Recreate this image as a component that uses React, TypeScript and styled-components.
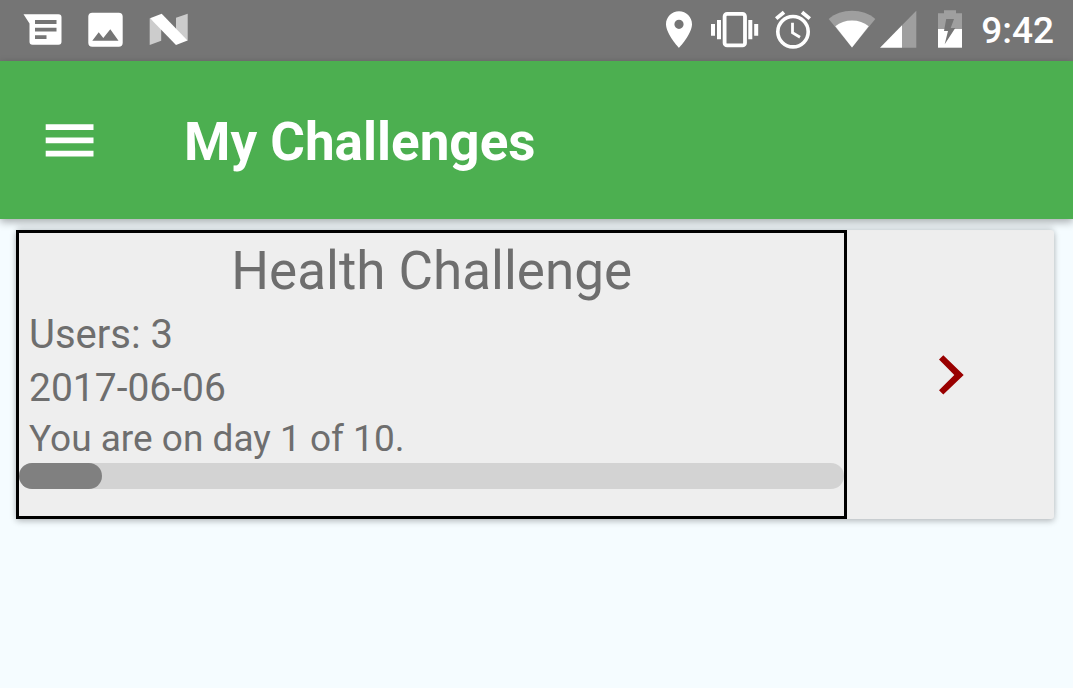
import React from "react";
import styled, { createGlobalStyle } from "styled-components";

const GlobalStyle = createGlobalStyle`
  *, *::before, *::after { box-sizing: border-box; }
  body {
    margin: 0;
    background: #f5fcff;
    color: #6e6e6e;
    font-family: Roboto, "Liberation Sans", sans-serif;
  }
`;

const StatusBar = styled.div`
  display: flex;
  align-items: center;
  justify-content: space-between;
  height: 61px;
  padding: 0 19px 1px 23px;
  background: #757575;
  color: #fff;
`;

const IconGroup = styled.div<{ $gap: number }>`
  display: flex;
  align-items: center;
  gap: ${(p) => p.$gap}px;
`;

const Glyph = styled.svg`
  display: block;
  flex: none;
  fill: #fff;
`;

const Clock = styled.time`
  padding-top: 2px;
  font-size: 37px;
  line-height: 46px;
  font-weight: 500;
`;

const Header = styled.header`
  position: relative;
  z-index: 1;
  display: flex;
  align-items: center;
  gap: 90px;
  height: 158px;
  padding: 0 45px;
  background: #4caf50;
  color: #fff;
  box-shadow: 0 3px 8px rgba(0, 0, 0, 0.32);
`;

const IconButton = styled.button`
  display: flex;
  align-items: center;
  justify-content: center;
  padding: 0;
  border: 0;
  background: transparent;
  color: inherit;
  cursor: pointer;
`;

const Title = styled.h1`
  margin: 0;
  padding-top: 4px;
  font-size: 53px;
  line-height: 62px;
  font-weight: 700;
`;

const Main = styled.main`
  padding: 11px 19px 16px 16px;
`;

const Card = styled.article`
  display: flex;
  background: #eee;
  border-radius: 3px;
  box-shadow:
    0 2px 6px rgba(0, 0, 0, 0.28),
    0 -6px 6px -1px rgba(0, 0, 0, 0.07);
`;

const Summary = styled.div`
  flex: 0 0 calc(80% + 1px);
  padding-bottom: 27px;
  border: 3px solid #000;
`;

const ChallengeName = styled.h2`
  margin: 0;
  font-size: 53px;
  line-height: 76px;
  font-weight: 400;
  text-align: center;
`;

const Detail = styled.p<{ $size: number; $line: number }>`
  margin: 0;
  padding: 0 10px;
  font-size: ${(p) => p.$size}px;
  line-height: ${(p) => p.$line}px;
`;

const Track = styled.div`
  height: 26px;
  border-radius: 13px;
  background: #d3d3d3;
`;

const Fill = styled.div`
  height: 100%;
  border-radius: 13px;
  background: #808080;
`;

const OpenButton = styled(IconButton)`
  flex: 1;
  color: #990000;
`;

const DIM = "#9f9f9f";

const MessageIcon = () => (
  <Glyph width="40" height="40" viewBox="0 0 40 40">
    <path d="M.5 4.2H35.5a3 3 0 0 1 3 3V31.700a3 3 0 0 1-3 3H9.500a3 3 0 0 1-3-3V13.500Z" />
    <path fill="#757575" d="M12 10h21.500v4H12zM12 17.700h21.500v3.800H12zM12 25.200h11.500v3.800H12z" />
  </Glyph>
);

const ImageIcon = () => (
  <Glyph width="40" height="40" viewBox="0 0 40 40">
    <rect x="2.3" y="2.700" width="34.400" height="34" rx="4" />
    <path fill="#757575" d="M6.300 30.800 12.700 22.300 17.300 27.900 24.300 19.300 32.500 30.800Z" />
  </Glyph>
);

const NougatIcon = () => (
  <Glyph width="40" height="40" viewBox="0 0 40 40">
    <path fill="#ccc" d="M.7 8.300 12.200 16V30.700L.7 35ZM27 7.700 38.700 3.700V30.700L27 24Z" />
    <path d="M1 8.300 12.700 3.700 38.500 30.400 27 35Z" />
  </Glyph>
);

const PinIcon = () => (
  <Glyph width="30" height="40" viewBox="0 0 30 40">
    <path
      fillRule="evenodd"
      d="M14 1.300C6.800 1.300 1 7.100 1 14.300 1 24 14 38 14 38S27 24 27 14.300C27 7.100 21.200 1.300 14 1.300ZM14 9.700a4.600 4.600 0 1 1 0 9.200 4.600 4.600 0 0 1 0-9.200Z"
    />
  </Glyph>
);

const VibrateIcon = () => (
  <Glyph width="48" height="40" viewBox="0 0 48 40">
    <rect x="13.600" y="3.900" width="20.400" height="31.500" rx="2.500" fill="none" stroke="#fff" strokeWidth="3.800" />
    <path d="M6 10h4v19.300H6zM0 14h4v11.700H0zM37.300 10h4v19.300h-4zM43.200 14h4v11.700h-4z" />
  </Glyph>
);

const AlarmIcon = () => (
  <Glyph width="37" height="40" viewBox="0 0 37 40">
    <g fill="none" stroke="#fff">
      <circle cx="18" cy="21.700" r="15.200" strokeWidth="3.600" />
      <path strokeWidth="2.800" d="M17.500 12.700V22.800L25 27.300" />
      <path strokeWidth="3.800" d="M1.200 8.600 9 2.200M27 2.200 34.800 8.600" />
    </g>
  </Glyph>
);

const WifiIcon = () => (
  <Glyph width="48" height="40" viewBox="0 0 48 40">
    <path fill={DIM} d="M24 37.500.7 9C7 3.500 15 .8 24 .8S41 3.500 47.300 9Z" />
    <path d="M24 37.500 7.300 16.200C12 12.200 17.500 10.400 24 10.400S36 12.200 40.700 16.200Z" />
  </Glyph>
);

const SignalIcon = () => (
  <Glyph width="40" height="40" viewBox="0 0 40 40">
    <path fill={DIM} d="M22 15.200 36.300.700V37.700H22Z" />
    <path d="M0 37.700 22 15.200V37.700Z" />
  </Glyph>
);

const BatteryIcon = () => (
  <Glyph width="29" height="40" viewBox="0 0 29 40">
    <path fill={DIM} d="M8 .3H20V3.300H26V19H2V3.300H8Z" />
    <path d="M2 19H26V37.700H2Z" />
    <path fill="#757575" d="M10.200 9H18L14.700 18H19.300L8.700 34.300 12 21H8Z" />
  </Glyph>
);

const MenuIcon = () => (
  <Glyph width="49" height="34" viewBox="0 0 49 34">
    <path d="M.7 1.300H48.500V7H.7zM.7 14.500H48.500V20.200H.7zM.7 27.700H48.500V33.400H.7z" />
  </Glyph>
);

const ChevronIcon = () => (
  <svg width="26" height="40" viewBox="0 0 26 40" fill="currentColor">
    <path d="M1 4.600 5.300.3 25.700 19.900 5.300 39.500 1 35.200 16.300 19.900Z" />
  </svg>
);

const challenge = {
  name: "Health Challenge",
  users: 3,
  date: "2017-06-06",
  day: 1,
  days: 10,
};

export default function App() {
  const percent = (challenge.day / challenge.days) * 100;
  return (
    <>
      <GlobalStyle />
      <StatusBar>
        <IconGroup $gap={23}>
          <MessageIcon />
          <ImageIcon />
          <NougatIcon />
        </IconGroup>
        <IconGroup $gap={16}>
          <PinIcon />
          <VibrateIcon />
          <AlarmIcon />
          <IconGroup $gap={4}>
            <WifiIcon />
            <SignalIcon />
          </IconGroup>
          <BatteryIcon />
          <Clock>9:42</Clock>
        </IconGroup>
      </StatusBar>
      <Header>
        <IconButton type="button" aria-label="Open menu">
          <MenuIcon />
        </IconButton>
        <Title>My Challenges</Title>
      </Header>
      <Main>
        <Card>
          <Summary>
            <ChallengeName>{challenge.name}</ChallengeName>
            <Detail $size={40} $line={52}>
              Users: {challenge.users}
            </Detail>
            <Detail $size={39} $line={54}>
              {challenge.date}
            </Detail>
            <Detail $size={37} $line={48}>
              You are on day {challenge.day} of {challenge.days}.
            </Detail>
            <Track
              role="progressbar"
              aria-label="Challenge progress"
              aria-valuemin={0}
              aria-valuemax={challenge.days}
              aria-valuenow={challenge.day}
            >
              <Fill style={{ width: `${percent}%` }} />
            </Track>
          </Summary>
          <OpenButton type="button" aria-label={`Open ${challenge.name}`}>
            <ChevronIcon />
          </OpenButton>
        </Card>
      </Main>
    </>
  );
}
